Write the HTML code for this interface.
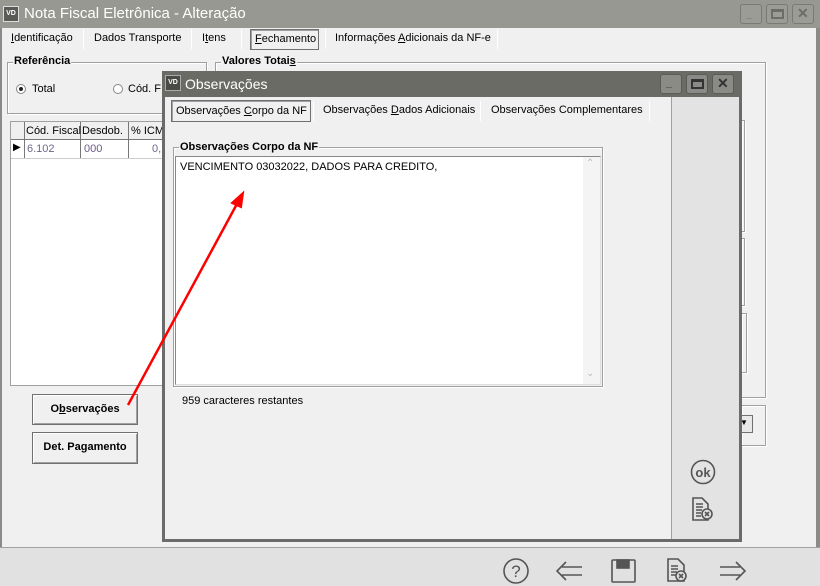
<!DOCTYPE html>
<html><head><meta charset="utf-8"><style>
*{box-sizing:border-box;margin:0;padding:0}
body{width:820px;height:586px;overflow:hidden;background:#f0f0f0;font-family:"Liberation Sans",sans-serif;font-size:11px;color:#000;position:relative}
.a{position:absolute}
.t{position:absolute;white-space:nowrap}
.grp{position:absolute;border:1px solid #a0a0a0;box-shadow:1px 1px 0 #fff inset,1px 1px 0 #fff}
.gl{position:absolute;background:#f0f0f0;font-weight:bold;padding:0 1px;white-space:nowrap}
.btn{position:absolute;background:#f0f0f0;border:1px solid #707070;box-shadow:inset 1px 1px 0 #fff,inset -1px -1px 0 #a0a0a0;font-weight:bold;text-align:center;line-height:29px}
.sep{position:absolute;width:1px;background:#a0a0a0;border-right:1px solid #fff}
.wb{position:absolute;width:22px;height:20px;border:1px solid #7a7a74;border-radius:3px;background:#9c9c96}
</style></head><body>
<div class="a" style="left:0;top:0;width:820px;height:28px;background:#989892"></div>
<div class="a" style="left:3px;top:6px;width:16px;height:16px;background:#5a5a56;border:1px solid #ddd;color:#fff;font-size:7px;line-height:14px;text-align:center;font-weight:bold">VD</div>
<div class="t" style="left:24px;top:5px;font-size:15px;color:#fff">Nota Fiscal Eletrônica - Alteração</div>
<div class="wb" style="left:740px;top:4px"></div><div class="wb" style="left:766px;top:4px"></div><div class="wb" style="left:792px;top:4px"></div>
<div class="t" style="left:746px;top:8px;color:#6c6c68;font-weight:bold">_</div>
<div class="a" style="left:771px;top:9px;width:13px;height:10px;border:2px solid #6c6c68;border-top-width:3px"></div>
<div class="t" style="left:797px;top:5px;color:#6c6c68;font-weight:bold;font-size:14px">✕</div>
<div class="a" style="left:0;top:28px;width:2px;height:520px;background:#8a8a86"></div>
<div class="a" style="left:816px;top:28px;width:4px;height:520px;background:#8a8a86"></div>
<div class="t" style="left:11px;top:32px"><u>I</u>dentificação</div>
<div class="sep" style="left:83px;top:29px;height:20px"></div>
<div class="t" style="left:94px;top:32px">Dados Transporte</div>
<div class="sep" style="left:191px;top:29px;height:20px"></div>
<div class="t" style="left:202px;top:32px">I<u>t</u>ens</div>
<div class="sep" style="left:241px;top:29px;height:20px"></div>
<div class="a" style="left:250px;top:29px;width:69px;height:21px;border:1px solid #707070;box-shadow:inset 1px 1px 0 #a0a0a0"></div>
<div class="t" style="left:255px;top:33px"><u>F</u>echamento</div>
<div class="sep" style="left:325px;top:29px;height:20px"></div>
<div class="t" style="left:335px;top:32px">Informações <u>A</u>dicionais da NF-e</div>
<div class="sep" style="left:497px;top:29px;height:20px"></div>
<div class="grp" style="left:7px;top:62px;width:200px;height:52px"></div>
<div class="gl" style="left:13px;top:55px">Referência</div>
<div class="a" style="left:16px;top:84px;width:10px;height:10px;border-radius:50%;border:1px solid #888;background:#fff"></div>
<div class="a" style="left:19px;top:87px;width:4px;height:4px;border-radius:50%;background:#222"></div>
<div class="t" style="left:32px;top:83px">Total</div>
<div class="a" style="left:113px;top:84px;width:10px;height:10px;border-radius:50%;border:1px solid #888;background:#fff"></div>
<div class="t" style="left:128px;top:83px">Cód. F</div>
<div class="grp" style="left:215px;top:62px;width:551px;height:336px"></div>
<div class="gl" style="left:221px;top:55px">Valores Totai<u>s</u></div>
<div class="grp" style="left:741px;top:120px;width:4px;height:112px"></div>
<div class="grp" style="left:741px;top:238px;width:4px;height:68px"></div>
<div class="grp" style="left:741px;top:313px;width:6px;height:60px"></div>
<div class="grp" style="left:741px;top:405px;width:25px;height:41px"></div>
<div class="a" style="left:738px;top:415px;width:15px;height:18px;border:1px solid #707070;background:#e8e8e8"></div>
<div class="t" style="left:740px;top:418px;font-size:8px">▼</div>
<div class="a" style="left:10px;top:121px;width:160px;height:265px;background:#fff;border:1px solid #a0a0a0"></div>
<div class="a" style="left:11px;top:122px;width:160px;height:18px;background:#f0f0f0;border-bottom:1px solid #777"></div>
<div class="a" style="left:24px;top:122px;width:1px;height:36px;background:#777"></div>
<div class="a" style="left:80px;top:122px;width:1px;height:36px;background:#777"></div>
<div class="a" style="left:128px;top:122px;width:1px;height:36px;background:#777"></div>
<div class="a" style="left:11px;top:158px;width:160px;height:1px;background:#ccc"></div>
<div class="t" style="left:26px;top:125px">Cód. Fiscal</div>
<div class="t" style="left:82px;top:125px">Desdob.</div>
<div class="t" style="left:131px;top:125px">% ICM</div>
<div class="t" style="left:13px;top:142px;font-size:10px">▶</div>
<div class="t" style="left:27px;top:143px;color:#6a6a8a">6.102</div>
<div class="t" style="left:84px;top:143px;color:#6a5a8a">000</div>
<div class="t" style="left:152px;top:143px;color:#6a6a8a">0,</div>
<div class="btn" style="left:32px;top:394px;width:106px;height:31px">O<u>b</u>servações</div>
<div class="btn" style="left:32px;top:432px;width:106px;height:32px">Det. Pa<u>g</u>amento</div>
<div class="a" style="left:0;top:547px;width:820px;height:39px;background:#e1e1e1;border-top:1px solid #a0a0a0"></div>
<svg class="a" style="left:500px;top:555px" width="250" height="31" viewBox="0 0 250 31" fill="none" stroke="#555" stroke-width="1.6">
<circle cx="16" cy="16" r="12"/><text x="16" y="22" font-size="17" text-anchor="middle" fill="#555" stroke="none" font-family="Liberation Sans">?</text>
<path d="M82 12H62M82 20H62M66 7L57 16L66 25"/>
<rect x="112" y="5" width="23" height="22" rx="1"/><rect x="117" y="5" width="12" height="8" fill="#555"/>
<path d="M168 4h10l6 6v16h-16z"/><path d="M171 11h7M171 14h7M171 17h6M171 20h5"/><circle cx="181" cy="21" r="5" fill="#e1e1e1"/><path d="M179 19l4 4M183 19l-4 4"/>
<path d="M220 12h20M220 20h20M236 7l9 9-9 9"/>
</svg>
<div class="a" style="left:162px;top:71px;width:580px;height:471px;background:#f0f0f0;border:3px solid #6b6b6b;border-top:none"></div>
<div class="a" style="left:162px;top:71px;width:580px;height:26px;background:#6b6b66"></div>
<div class="a" style="left:165px;top:75px;width:16px;height:16px;background:#4a4a46;border:1px solid #aaa;color:#fff;font-size:7px;line-height:14px;text-align:center;font-weight:bold">VD</div>
<div class="t" style="left:185px;top:76px;font-size:14px;color:#fff">Observações</div>
<div class="wb" style="left:660px;top:74px;background:#8a8a86;border-color:#5a5a56"></div><div class="wb" style="left:686px;top:74px;background:#8a8a86;border-color:#5a5a56"></div><div class="wb" style="left:712px;top:74px;background:#8a8a86;border-color:#5a5a56"></div>
<div class="t" style="left:666px;top:77px;color:#333;font-weight:bold">_</div>
<div class="a" style="left:691px;top:79px;width:13px;height:10px;border:2px solid #333;border-top-width:3px"></div>
<div class="t" style="left:717px;top:75px;color:#333;font-weight:bold;font-size:14px">✕</div>
<div class="a" style="left:671px;top:97px;width:68px;height:442px;background:#e3e3e3;border-left:1px solid #a0a0a0"></div>
<div class="a" style="left:171px;top:100px;width:140px;height:22px;border:1px solid #707070;box-shadow:inset 1px 1px 0 #a0a0a0"></div>
<div class="t" style="left:176px;top:105px">Observações <u>C</u>orpo da NF</div>
<div class="sep" style="left:313px;top:101px;height:20px"></div>
<div class="t" style="left:323px;top:104px">Observações <u>D</u>ados Adicionais</div>
<div class="sep" style="left:480px;top:101px;height:20px"></div>
<div class="t" style="left:491px;top:104px">Observações Complementares</div>
<div class="sep" style="left:649px;top:101px;height:20px"></div>
<div class="grp" style="left:173px;top:147px;width:430px;height:240px"></div>
<div class="gl" style="left:179px;top:141px">Observações Corpo da NF</div>
<div class="a" style="left:175px;top:156px;width:426px;height:229px;background:#fff;border:1px solid #888;border-right-color:#ddd;border-bottom-color:#ddd"></div>
<div class="a" style="left:583px;top:157px;width:17px;height:227px;background:#f4f4f4"></div>
<div class="t" style="left:586px;top:158px;color:#bbb;font-size:10px">⌃</div>
<div class="t" style="left:586px;top:368px;color:#bbb;font-size:10px">⌄</div>
<div class="t" style="left:180px;top:161px">VENCIMENTO 03032022, DADOS PARA CREDITO,</div>
<div class="t" style="left:182px;top:395px">959 caracteres restantes</div>
<svg class="a" style="left:688px;top:458px" width="32" height="66" viewBox="0 0 32 66" fill="none" stroke="#555" stroke-width="1.6">
<circle cx="15" cy="14" r="11.5"/><text x="15" y="19" font-size="13" font-weight="bold" text-anchor="middle" fill="#555" stroke="none" font-family="Liberation Sans">ok</text>
<path d="M5 40h9l6 6v16H5z"/><path d="M8 46h7M8 49h7M8 52h6M8 55h5M8 58h5"/><circle cx="19" cy="56" r="5" fill="#e3e3e3"/><path d="M17 54l4 4M21 54l-4 4"/>
</svg>
<svg class="a" style="left:0;top:0" width="820" height="586">
<path d="M128 405L238 202" stroke="#f00" stroke-width="2.5"/>
<path d="M243 193L232 203L241 207Z" fill="#f00" stroke="#f00" stroke-width="2"/>
</svg>
</body></html>
